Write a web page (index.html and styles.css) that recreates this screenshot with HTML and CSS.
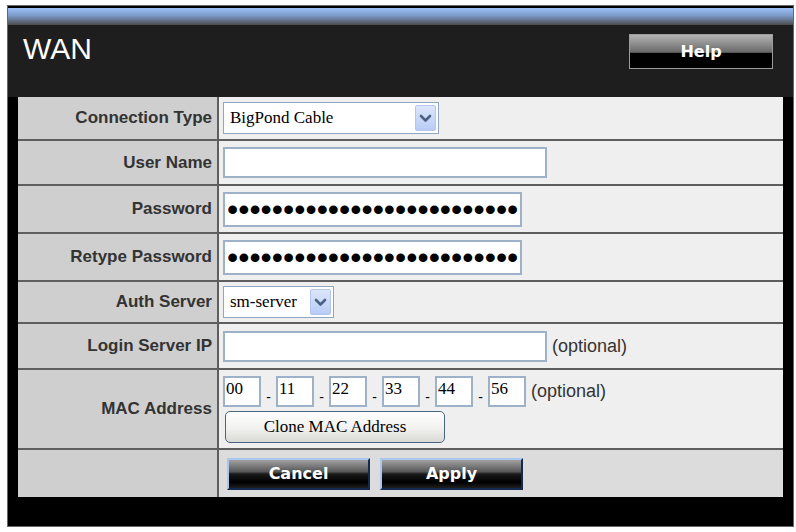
FILE: index.html
```html
<!DOCTYPE html>
<html>
<head>
  <meta charset="utf-8">
  <title>WAN</title>

  <link rel="stylesheet" href="styles.css">

</head>

<body>

  <div class="frame">

    <div class="topbar"></div>

    <div class="header">
      <h1 class="title">WAN</h1>
      <button class="btn-help" type="button">Help</button>
    </div>

    <form class="form" onsubmit="return false;">

      <div class="label">Connection Type</div>
      <div class="value">
        <div class="select select-conn">
          <span class="select-text">BigPond Cable</span>
          <span class="select-arrow">
            <svg width="19" height="24" viewBox="0 0 19 24">
              <path d="M5 10 L9.5 14.5 L14 10" fill="none" stroke="#4d6187" stroke-width="2.6" stroke-linecap="round" stroke-linejoin="round"/>
            </svg>
          </span>
        </div>
      </div>

      <div class="label">User Name</div>
      <div class="value">
        <input class="text text-long" type="text" value="">
      </div>

      <div class="label">Password</div>
      <div class="value">
        <input class="text text-pass" type="password" value="bigpondpassword12345678901">
      </div>

      <div class="label">Retype Password</div>
      <div class="value">
        <input class="text text-pass" type="password" value="bigpondpassword12345678901">
      </div>

      <div class="label">Auth Server</div>
      <div class="value">
        <div class="select select-auth">
          <span class="select-text">sm-server</span>
          <span class="select-arrow">
            <svg width="19" height="24" viewBox="0 0 19 24">
              <path d="M5 10 L9.5 14.5 L14 10" fill="none" stroke="#4d6187" stroke-width="2.6" stroke-linecap="round" stroke-linejoin="round"/>
            </svg>
          </span>
        </div>
      </div>

      <div class="label">Login Server IP</div>
      <div class="value">
        <input class="text text-long" type="text" value="">
        <span class="optional">(optional)</span>
      </div>

      <div class="label">MAC Address</div>
      <div class="value value-mac">
        <div class="mac-row">
          <input class="text mac" type="text" value="00">
          <span class="dash">-</span>
          <input class="text mac" type="text" value="11">
          <span class="dash">-</span>
          <input class="text mac" type="text" value="22">
          <span class="dash">-</span>
          <input class="text mac" type="text" value="33">
          <span class="dash">-</span>
          <input class="text mac" type="text" value="44">
          <span class="dash">-</span>
          <input class="text mac" type="text" value="56">
          <span class="optional optional-mac">(optional)</span>
        </div>
        <button class="btn-clone" type="button">Clone MAC Address</button>
      </div>

      <div class="label label-foot"></div>
      <div class="value value-foot">
        <button class="btn-action btn-cancel" type="button">Cancel</button>
        <button class="btn-action btn-apply" type="submit">Apply</button>
      </div>

    </form>

  </div>

</body>
</html>
```

FILE: styles.css
```css
body {
  margin: 0px;
  background-color: #fff;
  font-family: 'Liberation Sans', Arial, sans-serif;
}
.frame {
  box-sizing: border-box;
  width: 787px;
  height: 522px;
  margin: 5px 0 0 7px;
  padding-bottom: 29px;
  border: 1px solid #676767;
  background-color: #000;
  display: flex;
  flex-direction: column;
}
.topbar {
  height: 17px;
  margin-top: 2px;
  background: linear-gradient(#9dc0f6, #7c9bca 45%, #4b4b4b);
}
.header {
  box-sizing: border-box;
  height: 72px;
  padding: 9px 20px 0 15px;
  background-color: #1e1e1e;
  display: flex;
  justify-content: space-between;
  align-items: flex-start;
}
.title {
  margin: 0;
  font-size: 30px;
  line-height: 29px;
  font-weight: normal;
  color: #fff;
}
.btn-help {
  box-sizing: border-box;
  width: 144px;
  height: 35px;
  margin: 0;
  border: 1px solid #9c9c9c;
  background: linear-gradient(#b4b4b4, #6c6c6c 50%, #4a4a4a 54%, #000 56%, #000);
  color: #fff;
  font-family: 'DejaVu Sans', Verdana, sans-serif;
  font-weight: bold;
  font-size: 16px;
}

/* form table */
.form {
  margin: 0 10px;
  display: grid;
  grid-template-columns: 199px 1fr;
  grid-template-rows: 42px 43px 46px 46px 40px 44px 78px 47px;
  gap: 2px;
  background-color: #5e5e5e;
}
.label {
  padding-right: 5px;
  background-color: #cfcfcf;
  color: #333;
  font-size: 17px;
  font-weight: bold;
  display: flex;
  align-items: center;
  justify-content: flex-end;
}
.value {
  padding-left: 4px;
  background-color: #efefef;
  display: flex;
  align-items: center;
}
.value-foot {
  background-color: #dcdcdc;
}
.value-mac {
  flex-direction: column;
  align-items: flex-start;
  justify-content: center;
}

/* fields */
.text {
  box-sizing: border-box;
  height: 31px;
  margin: 0;
  padding: 0 3px;
  border: 2px solid #9db1c9;
  background-color: #fff;
  color: #000;
  font-family: 'Liberation Serif', 'Times New Roman', serif;
  font-size: 17px;
}
.text-long {
  width: 324px;
}
.text-pass {
  width: 299px;
  height: 35px;
  padding: 0 2px;
  font-family: 'Liberation Sans', Arial, sans-serif;
  font-size: 32px;
}
.select {
  box-sizing: border-box;
  height: 32px;
  padding: 0 2px 0 6px;
  border: 1px solid #8fa6c2;
  background-color: #fff;
  display: flex;
  align-items: center;
}
.select-conn {
  width: 216px;
}
.select-auth {
  width: 111px;
}
.select-text {
  flex: 1;
  font-family: 'Liberation Serif', 'Times New Roman', serif;
  font-size: 17px;
  color: #000;
  white-space: nowrap;
}
.select-arrow {
  width: 19px;
  height: 24px;
  border: 1px solid #b3c5ee;
  border-radius: 2px;
  background: linear-gradient(#dce6fb, #b8ccf5);
  display: flex;
}
.optional {
  margin-left: 5px;
  color: #333;
  font-size: 18px;
}
.mac-row {
  display: flex;
  align-items: center;
}
.mac {
  width: 38px;
  padding: 0 0 5px 1px;
}
.dash {
  width: 15px;
  align-self: flex-end;
  margin-bottom: 3px;
  text-align: center;
  font-size: 14px;
  line-height: 14px;
  color: #000;
}
.optional-mac {
  margin-left: 5px;
}
.btn-clone {
  box-sizing: border-box;
  width: 220px;
  height: 32px;
  margin: 4px 0 0 2px;
  border: 1px solid #4a6582;
  border-radius: 5px;
  background: linear-gradient(#ffffff, #f1f1ef 55%, #d9d9d5);
  color: #000;
  font-family: 'Liberation Serif', 'Times New Roman', serif;
  font-size: 17px;
}
.btn-action {
  box-sizing: border-box;
  width: 143px;
  height: 32px;
  margin: 0;
  border: 2px solid;
  border-color: #a9c6ee #14294f #14294f #a9c6ee;
  background: linear-gradient(#a2a2a2, #565656 42%, #1a1a1a 50%, #000 80%, #1e1e1e);
  color: #fff;
  font-family: 'DejaVu Sans', Verdana, sans-serif;
  font-weight: bold;
  font-size: 16px;
}
.btn-cancel {
  margin-left: 4px;
}
.btn-apply {
  margin-left: 10px;
}
```
